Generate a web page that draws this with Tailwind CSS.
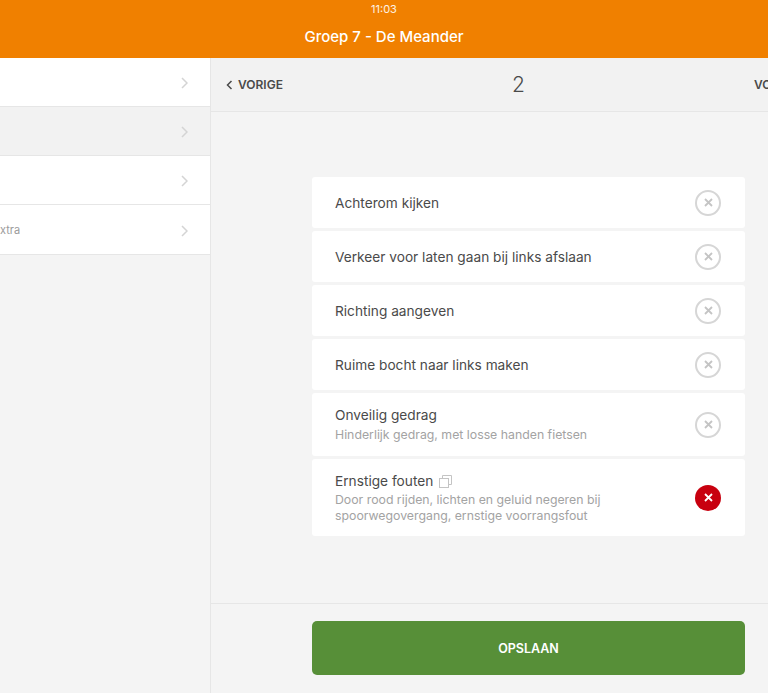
<!DOCTYPE html>
<html lang="nl">

<head>
    <meta charset="UTF-8">
    <meta name="viewport" content="width=device-width, initial-scale=1.0">
    <title>Groep 7 - De Meander</title>
    <script src="https://cdn.jsdelivr.net/npm/@tailwindcss/browser@4"></script>
</head>

<body class="h-[693px] w-[768px] overflow-hidden bg-[#f4f4f4] font-['Inter','Liberation_Sans',sans-serif] text-[#4a4a4a]">
    <header class="h-[58px] bg-[#f08000] text-white flex flex-col items-center">
        <div class="text-[11px] leading-3 pt-[3px] h-[19px] text-white/90">11:03</div>
        <h1 class="text-[15px] leading-[20px] font-medium pt-[8px] h-[39px]">Groep 7 - De Meander</h1>
    </header>
    <div class="flex h-[635px]">
        <aside class="w-[211px] shrink-0 border-r border-[#e6e6e6]">
            <div class="h-[49px] bg-white border-b border-[#e6e6e6] flex items-center justify-end pr-[22px] pt-[2px]">
                <svg width="7" height="12" viewBox="0 0 7 12" fill="none" stroke="#d4d4d4" stroke-width="1.5"><path d="M1 1l5 5-5 5" /></svg>
            </div>
            <div class="h-[49px] bg-[#f2f2f2] border-b border-[#e6e6e6] flex items-center justify-end pr-[22px] pt-[2px]">
                <svg width="7" height="12" viewBox="0 0 7 12" fill="none" stroke="#d4d4d4" stroke-width="1.5"><path d="M1 1l5 5-5 5" /></svg>
            </div>
            <div class="h-[49px] bg-white border-b border-[#e6e6e6] flex items-center justify-end pr-[22px] pt-[2px]">
                <svg width="7" height="12" viewBox="0 0 7 12" fill="none" stroke="#d4d4d4" stroke-width="1.5"><path d="M1 1l5 5-5 5" /></svg>
            </div>
            <div class="h-[50px] bg-white border-b border-[#e6e6e6] flex items-center justify-between pr-[22px] pt-[2px]">
                <span class="text-[11px] text-[#9b9b9b]">xtra</span>
                <svg width="7" height="12" viewBox="0 0 7 12" fill="none" stroke="#d4d4d4" stroke-width="1.5"><path d="M1 1l5 5-5 5" /></svg>
            </div>
        </aside>
        <main class="w-[614px] shrink-0 flex flex-col">
            <div class="h-[54px] shrink-0 border-b border-[#e6e6e6] bg-[#f2f2f2] flex items-center justify-between px-[15px]">
                <a class="flex items-center gap-[5px] text-xs font-semibold text-[#4a4a4a]">
                    <svg width="7" height="10" viewBox="0 0 7 10" fill="none" stroke="#4a4a4a" stroke-width="1.5"><path d="M5.5 1L1.5 5l4 4" /></svg>
                    VORIGE
                </a>
                <span class="text-[21px] font-light">2</span>
                <a class="text-xs font-semibold w-[56px]">VOLGENDE</a>
            </div>
            <div class="flex-1 pt-[65px] pl-[101px]">
                <ul class="w-[433px] flex flex-col gap-[3px]">
                    <li class="h-[51px] bg-white rounded-[3px] flex items-center justify-between pl-[23px] pr-[24px]">
                        <span class="text-[13.7px] pt-[2px]">Achterom kijken</span>
                        <span class="w-[26px] h-[26px] rounded-full border-2 border-[#d6d6d6] flex items-center justify-center">
                            <svg width="9" height="9" viewBox="0 0 9 9" stroke="#c4c4c4" stroke-width="1.8"><path d="M1 1l7 7M8 1l-7 7" /></svg>
                        </span>
                    </li>
                    <li class="h-[51px] bg-white rounded-[3px] flex items-center justify-between pl-[23px] pr-[24px]">
                        <span class="text-[13.7px] pt-[2px]">Verkeer voor laten gaan bij links afslaan</span>
                        <span class="w-[26px] h-[26px] rounded-full border-2 border-[#d6d6d6] flex items-center justify-center">
                            <svg width="9" height="9" viewBox="0 0 9 9" stroke="#c4c4c4" stroke-width="1.8"><path d="M1 1l7 7M8 1l-7 7" /></svg>
                        </span>
                    </li>
                    <li class="h-[51px] bg-white rounded-[3px] flex items-center justify-between pl-[23px] pr-[24px]">
                        <span class="text-[13.7px] pt-[2px]">Richting aangeven</span>
                        <span class="w-[26px] h-[26px] rounded-full border-2 border-[#d6d6d6] flex items-center justify-center">
                            <svg width="9" height="9" viewBox="0 0 9 9" stroke="#c4c4c4" stroke-width="1.8"><path d="M1 1l7 7M8 1l-7 7" /></svg>
                        </span>
                    </li>
                    <li class="h-[51px] bg-white rounded-[3px] flex items-center justify-between pl-[23px] pr-[24px]">
                        <span class="text-[13.7px] pt-[2px]">Ruime bocht naar links maken</span>
                        <span class="w-[26px] h-[26px] rounded-full border-2 border-[#d6d6d6] flex items-center justify-center">
                            <svg width="9" height="9" viewBox="0 0 9 9" stroke="#c4c4c4" stroke-width="1.8"><path d="M1 1l7 7M8 1l-7 7" /></svg>
                        </span>
                    </li>
                    <li class="h-[63px] bg-white rounded-[3px] flex items-center justify-between pl-[23px] pr-[24px]">
                        <div>
                            <div class="text-[13.7px] leading-[18px]">Onveilig gedrag</div>
                            <div class="text-[12.3px] leading-[16px] mt-[3px] text-[#a3a3a3]">Hinderlijk gedrag, met losse handen fietsen</div>
                        </div>
                        <span class="w-[26px] h-[26px] rounded-full border-2 border-[#d6d6d6] flex items-center justify-center">
                            <svg width="9" height="9" viewBox="0 0 9 9" stroke="#c4c4c4" stroke-width="1.8"><path d="M1 1l7 7M8 1l-7 7" /></svg>
                        </span>
                    </li>
                    <li class="h-[77px] bg-white rounded-[3px] flex items-center justify-between pl-[23px] pr-[24px]">
                        <div class="w-[310px] pt-[1px]">
                            <div class="text-[13.7px] leading-[18px] flex items-center gap-[5px]">
                                Ernstige fouten
                                <svg width="15" height="15" viewBox="0 0 15 15" fill="none" stroke="#c4c4c4"><path d="M4.5 4V1.5h9v9H11" /><rect x="1.5" y="4.5" width="9" height="9" /></svg>
                            </div>
                            <div class="text-[12.3px] leading-[16px] mt-[2px] text-[#a3a3a3]">Door rood rijden, lichten en geluid negeren bij<br>spoorwegovergang, ernstige voorrangsfout</div>
                        </div>
                        <span class="w-[26px] h-[26px] rounded-full bg-[#c8000f] flex items-center justify-center">
                            <svg width="9" height="9" viewBox="0 0 9 9" stroke="#ffffff" stroke-width="1.8"><path d="M1 1l7 7M8 1l-7 7" /></svg>
                        </span>
                    </li>
                </ul>
            </div>
            <div class="h-[90px] shrink-0 border-t border-[#e6e6e6] pt-[17px] pl-[101px]">
                <button class="w-[433px] h-[54px] pt-[2px] rounded-[5px] bg-[#578f38] text-white text-[12.5px] font-semibold">OPSLAAN</button>
            </div>
        </main>
    </div>
</body>

</html>
